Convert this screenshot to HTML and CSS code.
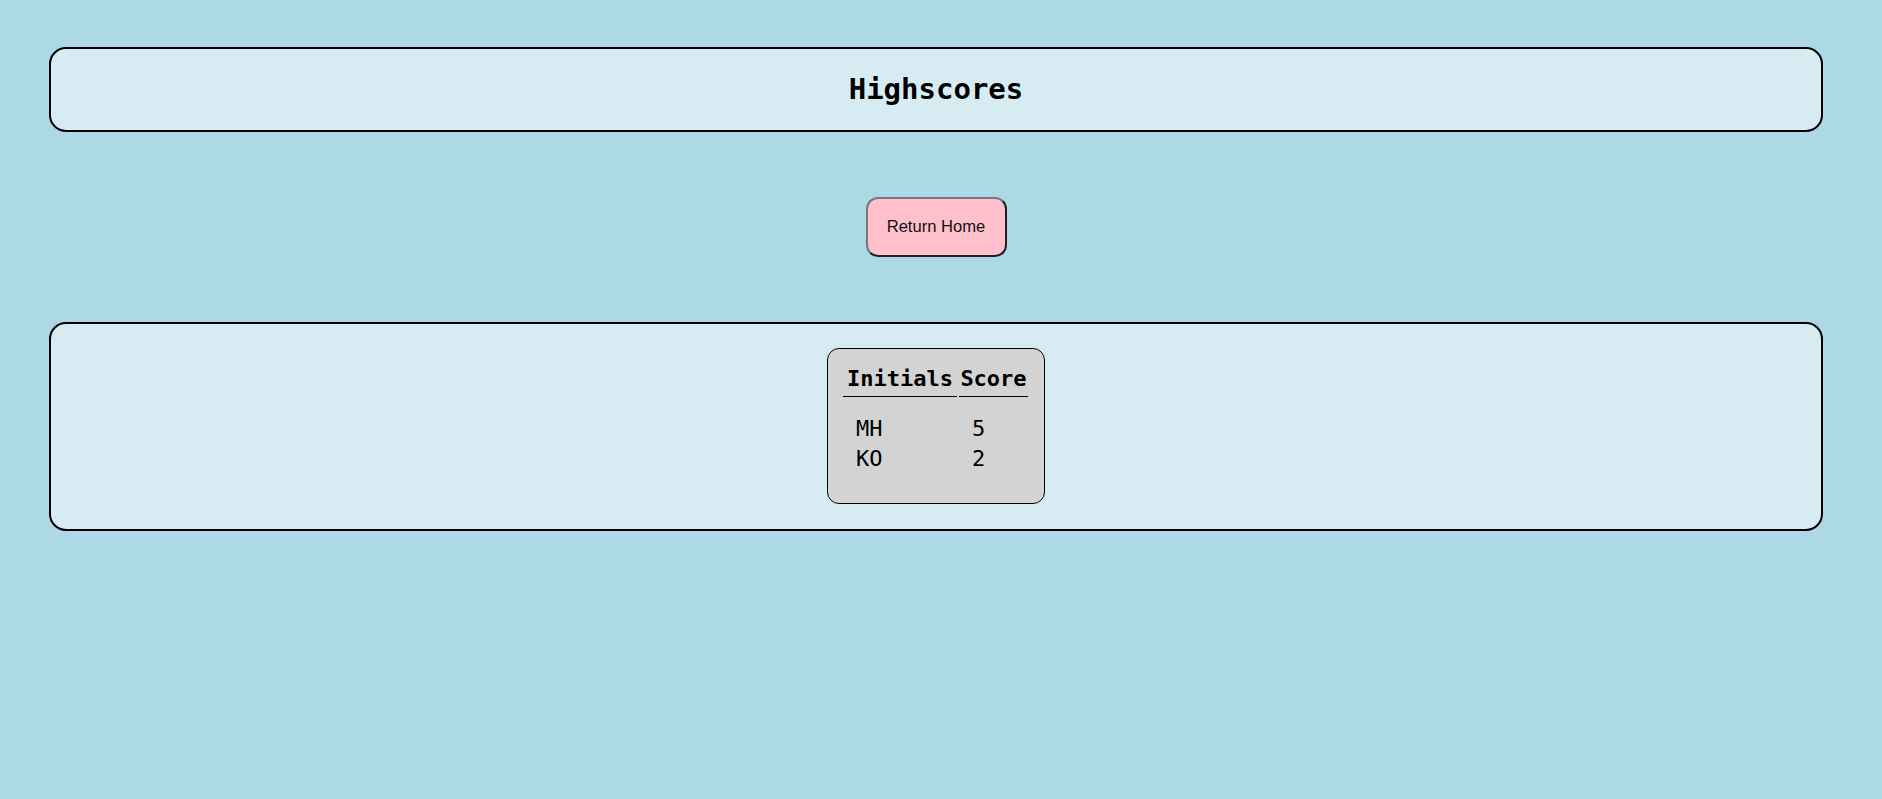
FILE: index.html
```html
<!DOCTYPE html>
<html>
<head>
<meta charset="utf-8">
<link rel="stylesheet" href="styles.css">
</head>
<body>
<div class="page">
  <header class="panel title-panel">
    <h1 class="title">Highscores</h1>
  </header>
  <div class="actions">
    <button class="home-btn">Return Home</button>
  </div>
  <section class="panel scores-panel">
    <div class="score-card">
      <table class="score-table">
        <thead>
          <tr><th class="col-initials">Initials</th><th class="col-score">Score</th></tr>
        </thead>
        <tbody>
          <tr class="first"><td>MH</td><td>5</td></tr>
          <tr><td>KO</td><td>2</td></tr>
        </tbody>
      </table>
    </div>
  </section>
</div>
</body>
</html>
```
FILE: styles.css
```css
* { box-sizing: border-box; }
html, body {
  margin: 0;
  background: #add8e6;
  font-family: "DejaVu Sans Mono", "Liberation Mono", monospace;
  color: #000;
}
.page {
  padding: 47px 59px 0 49px;
}
.panel {
  background: #d6ecf2;
  border: 2px solid #000;
  border-radius: 17px;
}
.title-panel {
  height: 85px;
  display: flex;
  align-items: center;
  justify-content: center;
}
.title {
  margin: 0;
  font-size: 29px;
  font-weight: bold;
  line-height: 1;
}
.actions {
  display: flex;
  justify-content: center;
  padding: 65px 0;
}
.home-btn {
  width: 141px;
  height: 60px;
  background: #ffc0cb;
  border: 2px solid;
  border-color: #777 #222 #222 #777;
  border-radius: 12px;
  font-family: "Liberation Sans", Arial, sans-serif;
  font-size: 16.6px;
  color: #111;
  padding: 0;
}
.scores-panel {
  height: 209px;
  display: flex;
  justify-content: center;
  padding-top: 24px;
}
.score-card {
  align-self: flex-start;
  background: #d3d3d3;
  border: 1px solid #000;
  border-radius: 12px;
  padding: 15px 14px 28px 13px;
}
.score-table {
  border-spacing: 2px;
}
.score-table th {
  font-size: 22px;
  font-weight: bold;
  line-height: 26px;
  padding: 0 0 4px;
  border-bottom: 1px solid #000;
  text-align: center;
}
.col-initials { width: 114px; }
.col-score { width: 69px; }
.score-table td {
  font-size: 22px;
  line-height: 28px;
  padding: 0 0 0 13px;
  text-align: left;
}
.score-table tr.first td {
  padding-top: 16px;
}
```
